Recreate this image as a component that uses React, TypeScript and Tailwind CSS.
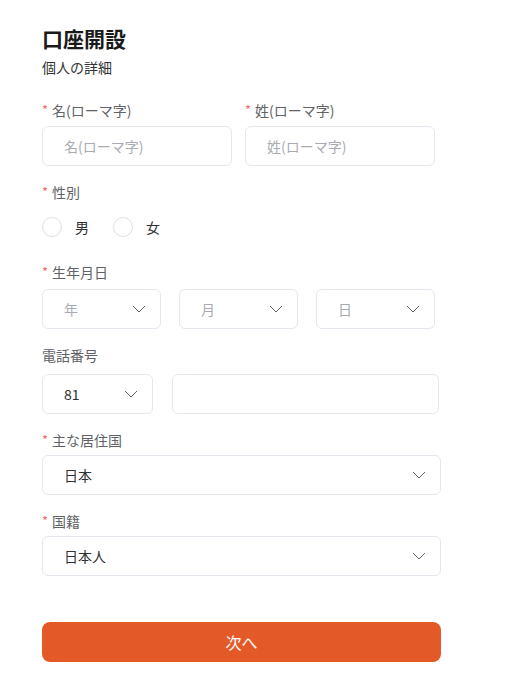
import React from "react";

const font = { fontFamily: '"Noto Sans CJK JP", "Noto Sans", sans-serif' };

function Chevron() {
  return (
    <svg width="14" height="8" viewBox="0 0 14 8" fill="none" className="shrink-0">
      <path d="M1 1l6 6 6-6" stroke="#606266" strokeWidth="1" />
    </svg>
  );
}

function Label({ text, required = true, className = "" }: { text: string; required?: boolean; className?: string }) {
  return (
    <div className={`h-5 flex items-center text-[14px] text-[#606266] ${className}`}>
      {required && <span className="text-[#f56c6c] mr-1 text-[13px]">*</span>}
      {text}
    </div>
  );
}

function Select({ value, placeholder, className = "" }: { value?: string; placeholder?: string; className?: string }) {
  return (
    <div className={`h-10 border border-[#e4e7ed] rounded-md flex items-center justify-between pl-[21px] pr-[14px] ${className}`}>
      <span className={`text-[14px] ${value ? "text-[#303133]" : "text-[#a8abb2]"}`}>{value || placeholder}</span>
      <Chevron />
    </div>
  );
}

function Radio({ label }: { label: string }) {
  return (
    <div className="flex items-center">
      <span className="w-5 h-5 rounded-full border border-[#dcdfe6]" />
      <span className="ml-[13px] text-[14px] text-[#303133]">{label}</span>
    </div>
  );
}

export default function App() {
  return (
    <div className="min-h-screen bg-white" style={font}>
      <div className="pl-[42px] pt-[24px] w-[442px] box-content">
        <h1 className="text-[21px] leading-7 font-bold text-[#1a1a1a]">口座開設</h1>
        <p className="text-[14px] leading-5 text-[#333] mt-[5px]">個人の詳細</p>

        <div className="flex gap-[13px] mt-[23px]">
          <div className="w-[190px]">
            <Label text="名(ローマ字)" />
            <input
              placeholder="名(ローマ字)"
              className="mt-1.5 w-full h-10 border border-[#e4e7ed] rounded-md pl-[21px] text-[14px] placeholder:text-[#a8abb2] outline-none"
            />
          </div>
          <div className="w-[190px]">
            <Label text="姓(ローマ字)" />
            <input
              placeholder="姓(ローマ字)"
              className="mt-1.5 w-full h-10 border border-[#e4e7ed] rounded-md pl-[21px] text-[14px] placeholder:text-[#a8abb2] outline-none"
            />
          </div>
        </div>

        <Label text="性別" className="mt-4" />
        <div className="flex items-center gap-[24px] h-10 mt-[5px]">
          <Radio label="男" />
          <Radio label="女" />
        </div>

        <Label text="生年月日" className="mt-[15px]" />
        <div className="flex gap-[18px] mt-[7px]">
          <Select placeholder="年" className="w-[119px]" />
          <Select placeholder="月" className="w-[119px]" />
          <Select placeholder="日" className="w-[119px]" />
        </div>

        <Label text="電話番号" required={false} className="mt-4" />
        <div className="flex gap-[19px] mt-[9px]">
          <Select value="81" className="w-[111px]" />
          <input className="w-[267px] h-10 border border-[#e4e7ed] rounded-md outline-none px-3 text-[14px]" />
        </div>

        <Label text="主な居住国" className="mt-4" />
        <Select value="日本" className="w-[399px] mt-[5px]" />

        <Label text="国籍" className="mt-4" />
        <Select value="日本人" className="w-[399px] mt-[5px]" />

        <button className="mt-[46px] w-[399px] h-10 rounded-lg bg-[#e35a28] text-white text-[16px]">次へ</button>
      </div>
    </div>
  );
}
